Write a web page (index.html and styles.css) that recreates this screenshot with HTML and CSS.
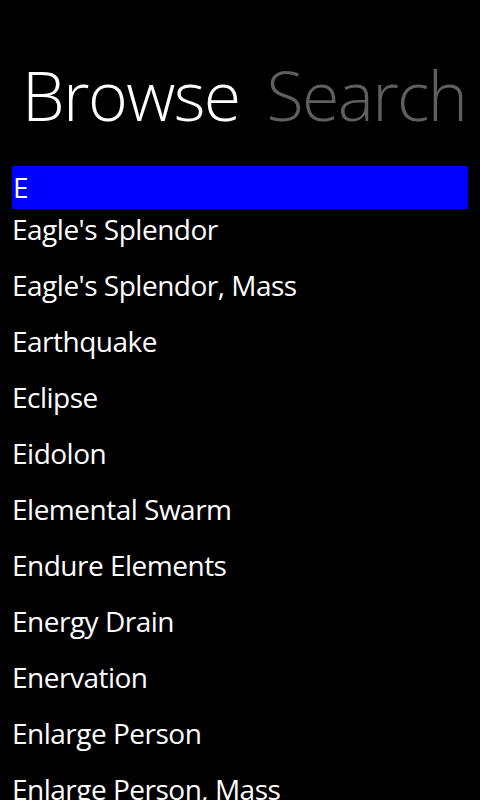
FILE: index.html
```html
<!DOCTYPE html>
<html>
<head>
<meta charset="utf-8">
<link rel="stylesheet" href="styles.css">
</head>
<body>
<div class="screen">
  <header class="pivot">
    <span class="pivot-item active">Browse</span>
    <span class="pivot-item">Search</span>
  </header>
  <ul class="list">
    <li class="group">E</li>
    <li class="item">Eagle's Splendor</li>
    <li class="item">Eagle's Splendor, Mass</li>
    <li class="item">Earthquake</li>
    <li class="item">Eclipse</li>
    <li class="item">Eidolon</li>
    <li class="item">Elemental Swarm</li>
    <li class="item">Endure Elements</li>
    <li class="item">Energy Drain</li>
    <li class="item">Enervation</li>
    <li class="item">Enlarge Person</li>
    <li class="item">Enlarge Person, Mass</li>
    <li class="item">Entangle</li>
  </ul>
</div>
</body>
</html>
```
FILE: styles.css
```css
html, body {
  margin: 0;
  padding: 0;
  background: #000;
}
.screen {
  width: 480px;
  height: 800px;
  overflow: hidden;
  background: #000;
  color: #fff;
  font-family: "Open Sans", "Noto Sans", sans-serif;
}
.pivot {
  display: flex;
  gap: 27px;
  padding: 47px 0 0 22px;
  height: 118px;
  box-sizing: border-box;
  white-space: nowrap;
}
.pivot-item {
  font-size: 68px;
  font-weight: 300;
  line-height: 96px;
  letter-spacing: -1.6px;
  color: #5f5f5f;
}
.pivot-item.active {
  color: #fff;
}
.list {
  list-style: none;
  margin: 48px 12px 0 12px;
  padding: 0;
}
.group {
  background: #0000ff;
  height: 43px;
  font-size: 28px;
  line-height: 42px;
  padding-left: 1px;
  box-sizing: border-box;
}
.item {
  height: 56px;
  font-size: 28px;
  line-height: 41px;
  letter-spacing: -0.5px;
  padding-left: 0;
  white-space: nowrap;
}
```
